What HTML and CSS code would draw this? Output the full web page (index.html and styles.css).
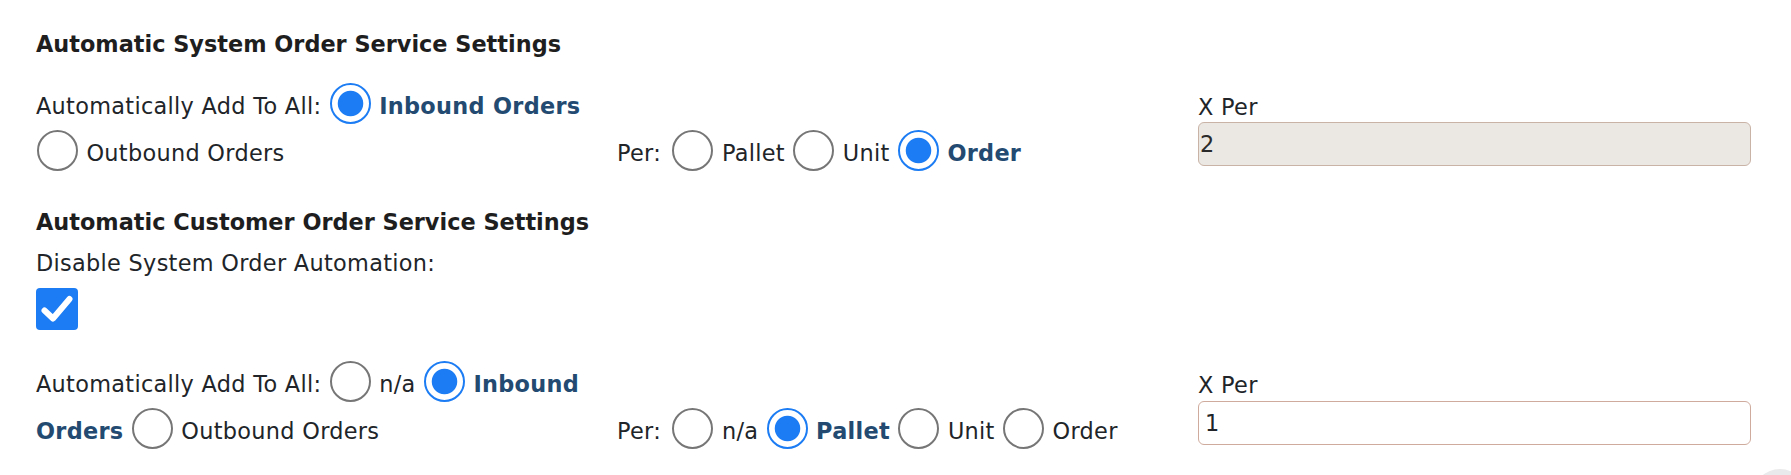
FILE: index.html
```html
<!DOCTYPE html>
<html lang="en">
<head>
<meta charset="utf-8">
<title>Order Service Settings</title>
<link rel="stylesheet" href="styles.css">
</head>
<body>
<main class="page">
  <section class="settings">
    <h2 class="section-title">Automatic System Order Service Settings</h2>
    <div class="form-row">
      <div class="col col-options">
        <span class="field-label">Automatically Add To All:</span>
        <input type="radio" class="radio" id="sys-in" name="sys-add" checked>
        <label for="sys-in" class="opt">Inbound Orders</label>
        <input type="radio" class="radio" id="sys-out" name="sys-add">
        <label for="sys-out" class="opt">Outbound Orders</label>
      </div>
      <div class="col col-per">
        <span class="field-label per-label">Per:</span>
        <input type="radio" class="radio" id="sys-pallet" name="sys-per">
        <label for="sys-pallet" class="opt">Pallet</label>
        <input type="radio" class="radio" id="sys-unit" name="sys-per">
        <label for="sys-unit" class="opt">Unit</label>
        <input type="radio" class="radio" id="sys-order" name="sys-per" checked>
        <label for="sys-order" class="opt">Order</label>
      </div>
      <div class="col col-xper">
        <label class="input-label" for="sys-xper">X Per</label>
        <input type="text" class="text-input" id="sys-xper" value="2" disabled>
      </div>
    </div>
  </section>

  <section class="settings settings-customer">
    <h2 class="section-title">Automatic Customer Order Service Settings</h2>
    <span class="toggle-label">Disable System Order Automation:</span>
    <span class="checkbox" role="checkbox" aria-checked="true">
      <svg viewBox="0 0 42 42" width="42" height="42" aria-hidden="true">
        <path d="M8.5 22.5 L17 30.5 L33.5 11" fill="none" stroke="#fff" stroke-width="6" stroke-linecap="round" stroke-linejoin="round"/>
      </svg>
    </span>
    <div class="form-row form-row-customer">
      <div class="col col-options">
        <span class="field-label">Automatically Add To All:</span>
        <input type="radio" class="radio" id="cus-na" name="cus-add">
        <label for="cus-na" class="opt">n/a</label>
        <input type="radio" class="radio" id="cus-in" name="cus-add" checked>
        <label for="cus-in" class="opt">Inbound Orders</label>
        <input type="radio" class="radio" id="cus-out" name="cus-add">
        <label for="cus-out" class="opt">Outbound Orders</label>
      </div>
      <div class="col col-per">
        <span class="field-label per-label">Per:</span>
        <input type="radio" class="radio" id="cus-per-na" name="cus-per">
        <label for="cus-per-na" class="opt">n/a</label>
        <input type="radio" class="radio" id="cus-pallet" name="cus-per" checked>
        <label for="cus-pallet" class="opt">Pallet</label>
        <input type="radio" class="radio" id="cus-unit" name="cus-per">
        <label for="cus-unit" class="opt">Unit</label>
        <input type="radio" class="radio" id="cus-order" name="cus-per">
        <label for="cus-order" class="opt">Order</label>
      </div>
      <div class="col col-xper">
        <label class="input-label" for="cus-xper">X Per</label>
        <input type="text" class="text-input" id="cus-xper" value="1">
      </div>
    </div>
  </section>
</main>
<div class="scroll-top" aria-hidden="true"></div>
</body>
</html>
```

FILE: styles.css
```css
html, body {
  margin: 0;
  padding: 0;
  background: #ffffff;
}

body {
  font-family: "DejaVu Sans", Verdana, sans-serif;
  font-size: 22.4px;
  line-height: 1.5;
  letter-spacing: 0.3px;
  color: #212529;
}

.page {
  padding: 28px 40px 0 36px;
}

.section-title {
  font-size: inherit;
  font-weight: bold;
  line-height: 1.5;
  letter-spacing: 0;
  margin: 0 0 18px;
  color: #1e1e1e;
}

.settings-customer .section-title {
  margin: 32.5px 0 0;
}

.form-row {
  display: grid;
  grid-template-columns: repeat(3, minmax(0, 1fr));
  column-gap: 28px;
}

.form-row-customer {
  margin-top: 28.7px;
}

.col-per {
  padding-top: 47px;
}

.col-xper {
  padding-top: 14px;
}

.per-label {
  margin-right: 3px;
}

.radio {
  -webkit-appearance: none;
  appearance: none;
  box-sizing: border-box;
  width: 41px;
  height: 41px;
  margin: 3px 1px;
  border: 2px solid #767676;
  border-radius: 50%;
  background: #ffffff;
  vertical-align: -13px;
}

.radio:checked {
  border-color: #1b7cf3;
  background: radial-gradient(circle at center, #1b7cf3 0, #1b7cf3 12.3px, #ffffff 13.2px);
}

.opt {
  color: #212529;
}

.radio:checked + .opt {
  font-weight: bold;
  color: #234b72;
}

.input-label {
  display: block;
  line-height: 1.2;
  margin-bottom: 1.3px;
}

.text-input {
  display: block;
  box-sizing: border-box;
  width: 100%;
  height: 44px;
  margin: 0;
  padding: 0 6px;
  border: 1px solid #cfab9d;
  border-radius: 6px;
  background: #ffffff;
  font: inherit;
  letter-spacing: 0;
  color: #212529;
  outline: none;
}

.text-input:disabled {
  padding-left: 1px;
  background: #ebe8e3;
  border-color: #c9b3a7;
  color: #2a2a2a;
  -webkit-text-fill-color: #2a2a2a;
  opacity: 1;
}

.toggle-label {
  display: block;
  margin-top: 7px;
}

.checkbox {
  display: block;
  width: 42px;
  height: 42px;
  margin-top: 7.4px;
  border-radius: 4px;
  background: #1b7cf3;
}

.checkbox svg {
  display: block;
}

.scroll-top {
  position: fixed;
  right: -17px;
  bottom: -50px;
  width: 56px;
  height: 56px;
  border-radius: 50%;
  background: #e9eaeb;
}
```
